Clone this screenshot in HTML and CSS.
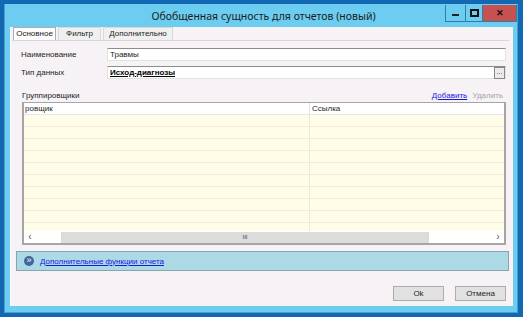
FILE: index.html
```html
<!DOCTYPE html>
<html>
  <head>
    <meta charset="UTF-8" />
    <title>Обобщенная сущность для отчетов (новый)</title>
    <link rel="stylesheet" href="styles.css">
  </head>
  <body>
    <div class="window">
      <div class="titlebar">
        <div class="title">Обобщенная сущность для отчетов (новый)</div>
        <div class="controls">
          <div class="ctl ctl-min"><span class="min-bar"></span></div>
          <div class="ctl ctl-max"><span class="max-box"></span></div>
          <div class="ctl ctl-close">&#x2715;</div>
        </div>
      </div>
      <div class="client">
        <div class="tabs">
          <div class="tab active">Основное</div>
          <div class="tab">Фильтр</div>
          <div class="tab tab-wide">Дополнительно</div>
        </div>
        <div class="page">
          <div class="form">
            <label>Наименование</label>
            <div class="field">Травмы</div>
            <label>Тип данных</label>
            <div class="field field-ref">
              <span class="ref">Исход-диагнозы</span>
              <span class="dots">...</span>
            </div>
          </div>
          <div class="group-head">
            <span>Группировщики</span>
            <span class="actions">
              <a class="link" href="#">Добавить</a>
              <span class="disabled">Удалить</span>
            </span>
          </div>
          <div class="grid">
            <div class="grid-row grid-header">
              <div class="cell c1">ровщик</div>
              <div class="cell c2">Ссылка</div>
            </div>
            <div class="grid-body">
              <div class="grid-row"><div class="cell c1"></div><div class="cell c2"></div></div>
              <div class="grid-row"><div class="cell c1"></div><div class="cell c2"></div></div>
              <div class="grid-row"><div class="cell c1"></div><div class="cell c2"></div></div>
              <div class="grid-row"><div class="cell c1"></div><div class="cell c2"></div></div>
              <div class="grid-row"><div class="cell c1"></div><div class="cell c2"></div></div>
              <div class="grid-row"><div class="cell c1"></div><div class="cell c2"></div></div>
              <div class="grid-row"><div class="cell c1"></div><div class="cell c2"></div></div>
              <div class="grid-row"><div class="cell c1"></div><div class="cell c2"></div></div>
              <div class="grid-row"><div class="cell c1"></div><div class="cell c2"></div></div>
              <div class="grid-row"><div class="cell c1"></div><div class="cell c2"></div></div>
            </div>
            <div class="hscroll">
              <div class="arrow">&#8249;</div>
              <div class="track-left"></div>
              <div class="thumb"><span class="grip">III</span></div>
              <div class="track-right"></div>
              <div class="arrow">&#8250;</div>
            </div>
          </div>
        </div>
        <div class="extra">
          <span class="extra-icon">&raquo;</span>
          <a class="link" href="#">Дополнительные функции отчета</a>
        </div>
        <div class="footer">
          <button class="btn">Ok</button>
          <button class="btn">Отмена</button>
        </div>
      </div>
    </div>
  </body>
</html>
```

FILE: styles.css
```css
html,
body {
  margin: 0;
  height: 100%;
}

body {
  background-color: #1268b3;
  padding: 4px 5px 4px 4px;
  box-sizing: border-box;
  font-family: "Liberation Sans", Arial, sans-serif;
  font-size: 8px;
  color: #1e1e1e;
}

.window {
  height: 100%;
  display: flex;
  flex-direction: column;
  background-color: #6ccdf1;
  border: 1px solid #4a9fc7;
  border-top: none;
  box-sizing: border-box;
  padding: 0 4px 6px 5px;
}

.titlebar {
  height: 23px;
  display: flex;
  flex-shrink: 0;
}

.title {
  flex: 1;
  text-align: center;
  font-family: "Noto Sans", sans-serif;
  font-size: 10.5px;
  line-height: 24px;
  color: #1b1b1b;
  padding-left: 72px;
}

.controls {
  display: flex;
  height: 16px;
  margin-top: 1px;
  margin-right: -4px;
  border: 1px solid #2f7fa3;
  border-top: none;
}

.ctl {
  height: 16px;
  display: flex;
  align-items: center;
  justify-content: center;
}

.ctl-min,
.ctl-max {
  width: 19px;
  background-color: #6ccdf1;
  border-right: 1px solid #2f7fa3;
}

.ctl-max {
  width: 16px;
}

.min-bar {
  width: 7px;
  height: 2px;
  margin-top: 3px;
  background-color: #222;
}

.max-box {
  width: 5px;
  height: 4px;
  border: 2px solid #111;
}

.ctl-close {
  width: 33px;
  background-color: #c75050;
  color: #111;
  font-size: 9px;
  font-weight: bold;
}

.client {
  flex: 1;
  background-color: #f6f2f6;
  border-left: 1px solid #ffffff;
  display: flex;
  flex-direction: column;
  padding: 0 4px 0 1px;
}

.tabs {
  display: flex;
  height: 13px;
  padding-left: 1px;
  border-bottom: 1px solid #d8d8d8;
}

.tab {
  width: 43px;
  font-size: 8px;
  line-height: 12px;
  text-align: center;
  border: 1px solid #d9d9d9;
  border-bottom: none;
  margin-right: 2px;
  background-color: #f0f0f0;
  color: #222;
  box-sizing: border-box;
}

.tab-wide {
  width: 70px;
}

.tab.active {
  background-color: #fcfcfc;
  border-color: #adadad;
}

.page {
  padding: 7px 3px 0 9px;
}

.form {
  display: grid;
  grid-template-columns: 86px 1fr;
  row-gap: 5px;
  align-items: center;
}

.field {
  height: 13px;
  background-color: #ffffff;
  border: 1px solid #e2e2e2;
  border-top-color: #8c8c8c;
  box-sizing: border-box;
  line-height: 11px;
  padding-left: 2px;
  display: flex;
  align-items: center;
  justify-content: space-between;
}

.ref {
  font-weight: bold;
  text-decoration: underline;
  color: #000;
}

.dots {
  width: 9px;
  height: 10px;
  border: 1px solid #888;
  background-color: #ececec;
  font-size: 7px;
  line-height: 8px;
  text-align: center;
  color: #333;
}

.group-head {
  display: flex;
  justify-content: space-between;
  margin-top: 10px;
  height: 13px;
  line-height: 13px;
  padding-right: 3px;
  padding-left: 1px;
}

.link {
  color: #1a16e0;
  text-decoration: underline;
}

.disabled {
  color: #a5a5a5;
  margin-left: 3px;
}

.grid {
  margin-left: 1px;
  height: 143px;
  border: 2px solid #a6a6a6;
  border-top: 1px solid #a6a6a6;
  box-sizing: border-box;
  background-color: #fffde8;
  display: flex;
  flex-direction: column;
  overflow: hidden;
}

.grid-row {
  display: flex;
  height: 12px;
  border-bottom: 1px solid #f0ede0;
  box-sizing: border-box;
}

.grid-header {
  background-color: #ffffff;
  border-bottom: 1px solid #e8e8e8;
}

.grid-body {
  flex: 1;
  overflow: hidden;
}

.cell {
  line-height: 12px;
  padding-left: 1px;
}

.c1 {
  width: 284px;
  border-right: 1px solid #eeeadb;
}

.grid-header .c1 {
  border-right-color: #e0e0e0;
}

.c2 {
  flex: 1;
  padding-left: 2px;
}

.hscroll {
  height: 11px;
  display: flex;
  background-color: #ffffff;
  border-top: 1px solid #ffffff;
}

.arrow {
  width: 12px;
  text-align: center;
  font-size: 10px;
  line-height: 10px;
  color: #555;
}

.track-left {
  width: 25px;
}

.thumb {
  width: 368px;
  background-color: #dcdcdc;
  text-align: center;
  font-size: 6px;
  line-height: 11px;
  color: #444;
}

.track-right {
  flex: 1;
}

.extra {
  margin: 6px 0 0 4px;
  height: 20px;
  background-color: #acd9e6;
  border: 1px solid #8aa3ad;
  box-sizing: border-box;
  display: flex;
  align-items: center;
  padding-left: 7px;
}

.extra-icon {
  width: 10px;
  height: 10px;
  border-radius: 50%;
  background-color: #41669c;
  color: #ffffff;
  font-size: 9px;
  line-height: 9px;
  text-align: center;
  margin-right: 6px;
}

.footer {
  display: flex;
  justify-content: flex-end;
  gap: 11px;
  margin-top: 15px;
  padding-right: 3px;
}

.btn {
  width: 51px;
  height: 15px;
  padding: 0;
  background-color: #e1e1e1;
  border: 1px solid #adadad;
  font-family: "Liberation Sans", Arial, sans-serif;
  font-size: 8px;
  color: #1e1e1e;
}
```
